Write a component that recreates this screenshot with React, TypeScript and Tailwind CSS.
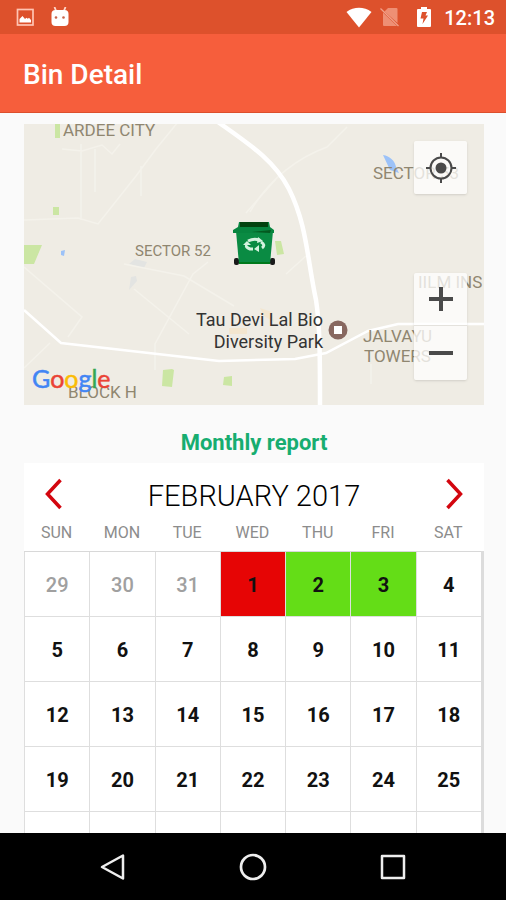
import clsx from "clsx";

type DayStatus = "missed" | "collected";

interface Day {
  date: number;
  outside?: boolean;
  status?: DayStatus;
}

const WEEKDAYS = ["SUN", "MON", "TUE", "WED", "THU", "FRI", "SAT"];

const STATUS: Record<number, DayStatus> = { 1: "missed", 2: "collected", 3: "collected" };

// February 2017 starts on a Wednesday
const DAYS: Day[] = [
  ...[29, 30, 31].map((date) => ({ date, outside: true })),
  ...Array.from({ length: 28 }, (_, i) => ({ date: i + 1, status: STATUS[i + 1] })),
  ...[1, 2, 3, 4].map((date) => ({ date, outside: true })),
];

const WEEKS = Array.from({ length: 5 }, (_, i) => DAYS.slice(i * 7, i * 7 + 7));

function StatusBar() {
  return (
    <div className="flex h-[34px] shrink-0 items-center justify-between bg-[#dd512c] pl-4 pr-[11px] text-white">
      <div className="flex items-center gap-4">
        <svg viewBox="0 0 18 18" className="size-[18px]" fill="none">
          <rect x="1.500" y="1.500" width="15.500" height="15.500" stroke="#ffc4b3" strokeWidth="1.7" />
          <path d="M3.500 14.500V11l3-3 2.500 3 1.500-1.300 1.300 1 1.200-1L15 12v2.500z" fill="#fff" />
        </svg>
        <svg viewBox="0 0 20 20" className="size-5">
          <path d="M4.500 0 6.500 5M15.500 0 13.500 5" stroke="#ffd9cc" strokeWidth="1.8" />
          <rect x="1.500" y="3" width="17" height="16" rx="4" fill="#fff" />
          <circle cx="6" cy="10.500" r="1.300" fill="#c9644a" />
          <circle cx="13.500" cy="10.500" r="1.300" fill="#c9644a" />
        </svg>
      </div>
      <div className="flex items-center">
        <svg viewBox="0 0 26 21" className="h-[21px] w-[26px]" fill="#fff">
          <path d="M.5 5C8-.6 18-.6 25.500 5L13 20.500z" />
        </svg>
        <svg viewBox="0 0 20 20" className="ml-2 size-5">
          <path d="M8 1h8.500a1 1 0 0 1 1 1v14L4.500 4.500z" fill="#ee8f74" />
          <path d="M3 5.500 17 19H4a1 1 0 0 1-1-1z" fill="#ee8f74" />
          <path d="M.5 1.500 18.500 19" stroke="#f0a28c" strokeWidth="1.2" />
        </svg>
        <svg viewBox="0 0 16 22" className="ml-4 h-[22px] w-4">
          <path d="M5 1h6v2h3a1 1 0 0 1 1 1v16a1 1 0 0 1-1 1H2a1 1 0 0 1-1-1V4a1 1 0 0 1 1-1h3z" fill="#fff" />
          <path d="M6 6h5L9.500 9.500H12L6.500 18 7.500 12.500H4.500z" fill="#dd512c" />
        </svg>
        <span className="ml-3 pt-0.5 text-xl font-medium leading-none">12:13</span>
      </div>
    </div>
  );
}

function BinMap() {
  return (
    <svg
      viewBox="0 0 460 281"
      preserveAspectRatio="xMidYMid slice"
      className="block w-full bg-[#efece4]"
      role="img"
      aria-label="Bin location"
    >
      <g fill="#cbe6a3">
        <path d="M31 0h5v14h-5zM29 83h6v8h-6zM0 121h18l-8 19H0z" />
        <path d="M251 117h6l3 13-7 1zM139 246l9-1 2 1-2 17-10-1zM200 253l8-1v10l-9-1z" />
      </g>
      <g fill="#9cc2f8">
        <path d="M359 31c7 1 12 6 13 12l3 6-9-3z" />
        <path d="M37 127l4-1-1 6-3-1z" />
      </g>
      <g fill="#e3e4e2">
        <path d="M105 140l6-5 12 3-3 6zM107 153l5-1 1 5-8 9z" />
      </g>
      <path d="M236 184l12 4 2 10-10-6zM205 204h18v6h-18z" fill="#f3e6cf" />
      <g fill="none" stroke="#f4f2eb" strokeWidth="1.5">
        <path d="M57 20v76M71 25v43M117 42v30M0 96l54-2 20 6 38-48 20-27 22-27M38 25l20 2 20-6 10 9 8-10" />
        <path d="M222 89l30-34M0 143l58 50-14 20M110 165l55 45M131 246v-26l38-70 15-12M100 140l60 12 50 30" />
        <path d="M226 88c20-35 50-55 77-65l20-20M0 244l26-25M262 150l20-18M347 240v20" />
      </g>
      <g fill="none" stroke="#fff">
        <path d="M194-2c31 22 56 38 71 67 18 36 18 69 27 111 4 25 4 60 4 107" strokeWidth="4.500" />
        <path d="M0 186l37 33 158 18 76-2 31-6 42-22 30-7h86" strokeWidth="2.500" />
      </g>

      <g className="font-['Roboto',sans-serif] text-[17px]" fill="#8f8670">
        <text x="39" y="12">ARDEE CITY</text>
        <text x="349" y="55">SECTOR 53</text>
        <text x="394" y="164">IILM INS</text>
        <text x="339" y="218">JALVAYU</text>
        <text x="340" y="238">TOWERS</text>
        <text x="44" y="274">BLOCK H</text>
      </g>
      <text x="111" y="132" className="font-['Roboto',sans-serif] text-[15px]" fill="#8f8670">
        SECTOR 52
      </text>
      <g className="font-['Roboto',sans-serif] text-[18px]" fill="#333" textAnchor="end">
        <text x="299" y="202">Tau Devi Lal Bio</text>
        <text x="299" y="224">Diversity Park</text>
      </g>
      <circle cx="314" cy="206" r="9.500" fill="#886860" />
      <rect x="310" y="202" width="8" height="8" fill="#fff" />

      {/* bin marker */}
      <rect x="210" y="134" width="5" height="7" rx="2" fill="#1a1a1a" />
      <rect x="246" y="134" width="5" height="7" rx="2" fill="#1a1a1a" />
      <path d="M212 107h37l-3 33h-31z" fill="#0a8b43" />
      <path d="M215 98h30l1 5 4 3v3h-41v-3l5-3z" fill="#07853f" />
      <path d="M216 98h28v5h-28z" fill="#02420f" />
      <path d="M228 108l19-2-1 3z" fill="#04591f" />
      <path d="M215 138h31v2h-31z" fill="#007a1c" />
      <path
        d="M224 117q6-3 11-1M237 118q5 3 1 6M229 125h-3q-5-2-3-4"
        fill="none"
        stroke="#d5f2df"
        strokeWidth="3"
      />
      <path d="M234 113l5 4-6 2zM235 121v7l-5-3zM219 121l4-4 4 4z" fill="#d5f2df" />

      <text x="8" y="264" className="font-['Lato',sans-serif] text-[25px]" strokeWidth="0.5">
        <tspan fill="#4285f4" stroke="#4285f4">G</tspan>
        <tspan fill="#ea4335" stroke="#ea4335">o</tspan>
        <tspan fill="#fbbc05" stroke="#fbbc05">o</tspan>
        <tspan fill="#4285f4" stroke="#4285f4">g</tspan>
        <tspan fill="#34a853" stroke="#34a853">l</tspan>
        <tspan fill="#ea4335" stroke="#ea4335">e</tspan>
      </text>
    </svg>
  );
}

function MapCard() {
  return (
    <section className="relative">
      <BinMap />
      <button
        aria-label="My location"
        className="absolute right-[17px] top-[17px] flex size-[53px] items-center justify-center rounded-xs bg-white/75 shadow"
      >
        <svg viewBox="0 0 30 30" className="size-[30px]" fill="none" stroke="#4a4a4a" strokeWidth="2">
          <circle cx="15" cy="15" r="10.500" />
          <circle cx="15" cy="15" r="5.500" fill="#4a4a4a" stroke="none" />
          <path d="M15 0v5M15 25v5M0 15h5M25 15h5" />
        </svg>
      </button>
      <div className="absolute bottom-[25px] right-[17px] flex w-[53px] flex-col divide-y divide-[#e4e2dd] rounded-xs bg-white/75 shadow">
        <button aria-label="Zoom in" className="flex h-[53px] items-center justify-center">
          <svg viewBox="0 0 24 24" className="size-6" stroke="#4a4a4a" strokeWidth="4">
            <path d="M0 12h24M12 0v24" />
          </svg>
        </button>
        <button aria-label="Zoom out" className="flex h-[54px] items-center justify-center">
          <svg viewBox="0 0 24 24" className="size-6" stroke="#4a4a4a" strokeWidth="4">
            <path d="M0 12h24" />
          </svg>
        </button>
      </div>
    </section>
  );
}

function Calendar() {
  return (
    <section className="bg-white pt-[11px]">
      <div className="flex h-10 items-center justify-between px-[21px]">
        <button aria-label="Previous month">
          <svg viewBox="0 0 17 32" className="h-8 w-[17px]" fill="none" stroke="#d3060f" strokeWidth="3.500">
            <path d="M15.500 2 2.500 16l13 14" />
          </svg>
        </button>
        <h3 className="pt-1 text-[29px] font-light leading-none text-black">FEBRUARY 2017</h3>
        <button aria-label="Next month">
          <svg viewBox="0 0 17 32" className="h-8 w-[17px]" fill="none" stroke="#d3060f" strokeWidth="3.500">
            <path d="M1.500 2l13 14-13 14" />
          </svg>
        </button>
      </div>
      <div className="flex">
        <div className="flex-1">
          <table className="w-full table-fixed border-separate border-spacing-0 text-center">
            <thead>
              <tr className="h-[38px]">
                {WEEKDAYS.map((day) => (
                  <th key={day} className="border-b border-[#d8d8d8] p-0 text-base font-normal text-[#8c8c8c]">
                    {day}
                  </th>
                ))}
              </tr>
            </thead>
            <tbody>
              {WEEKS.map((week, i) => (
                <tr key={i} className="h-[65px]">
                  {week.map(({ date, outside, status }) => (
                    <td
                      key={date}
                      className={clsx(
                        "border-b border-l border-[#dedede] p-0 pt-px text-xl",
                        outside ? "font-medium text-[#a0a0a0]" : "font-bold text-[#111]",
                        status === "missed" && "bg-[#e60505]",
                        status === "collected" && "bg-[#64dd17]"
                      )}
                    >
                      {date}
                    </td>
                  ))}
                </tr>
              ))}
            </tbody>
          </table>
        </div>
        <div className="mt-[37px] w-[3px] bg-[#dcdcdc]" />
      </div>
    </section>
  );
}

function NavBar() {
  return (
    <nav className="flex h-[67px] shrink-0 items-center justify-center gap-[112px] bg-black">
      <button aria-label="Back">
        <svg viewBox="0 0 28 28" className="size-7" fill="none" stroke="#eee" strokeWidth="2.500" strokeLinejoin="round">
          <path d="M24 2.500v23L3 14z" />
        </svg>
      </button>
      <button aria-label="Home">
        <svg viewBox="0 0 28 28" className="size-7" fill="none" stroke="#eee" strokeWidth="2.700">
          <circle cx="14" cy="14" r="12" />
        </svg>
      </button>
      <button aria-label="Recent apps">
        <svg viewBox="0 0 28 28" className="size-7" fill="none" stroke="#eee" strokeWidth="2.500" strokeLinejoin="round">
          <rect x="3" y="3" width="22" height="22" />
        </svg>
      </button>
    </nav>
  );
}

export default function App() {
  return (
    <div className="flex h-screen flex-col bg-[#fafafa] font-['Roboto',sans-serif]">
      <StatusBar />
      <header className="flex h-[79px] shrink-0 items-center border-b border-[#dc4f2c] bg-[#f65e3c] px-[23px]">
        <h1 className="pt-1 text-[28px] font-medium leading-none text-white">Bin Detail</h1>
      </header>
      <main className="min-h-0 flex-1 overflow-y-auto pl-6 pr-[22px] pt-[11px] [scrollbar-width:none]">
        <MapCard />
        <h2 className="pb-1 pt-[22px] text-center text-[22px] font-bold leading-8 text-[#17ad70]">Monthly report</h2>
        <Calendar />
      </main>
      <NavBar />
    </div>
  );
}
